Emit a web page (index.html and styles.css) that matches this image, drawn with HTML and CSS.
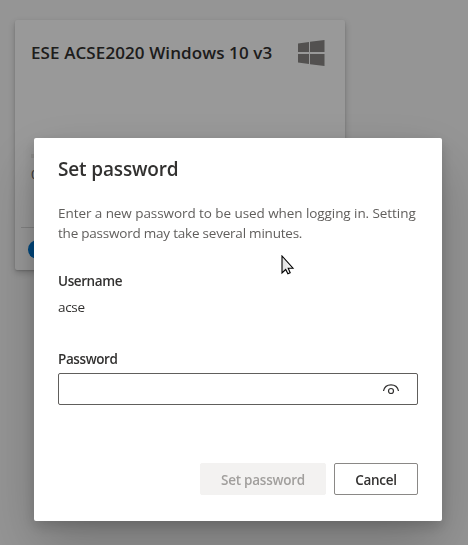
FILE: index.html
```
<!DOCTYPE html>
<html lang="en">
<head>
<meta charset="utf-8">
<title>Set password</title>
<link rel="stylesheet" href="styles.css">
</head>
<body>
<main class="page">
  <article class="card">
    <header class="card-header">
      <h2 class="card-title">ESE ACSE2020 Windows 10 v3</h2>
      <svg class="os-icon" width="27" height="26" viewBox="0 0 27 26" aria-hidden="true">
        <path d="M0 3.6 11 2v10H0zM12 1.8 26.5 0v12H12zM0 14h11v10L0 22.6zM12 14h14.5v12L12 24.2z"/>
      </svg>
    </header>
    <div class="card-body">
      <div class="progress"></div>
      <span class="hours">0</span>
    </div>
    <footer class="card-footer"><span class="toggle"></span></footer>
  </article>
</main>
<div class="overlay">
  <section class="dialog" role="dialog" aria-modal="true" aria-labelledby="dialog-title">
    <h1 class="dialog-title" id="dialog-title">Set password</h1>
    <p class="description"><span class="line-first">Enter a new password to be used when logging in. Setting</span><br><span class="line-second">the password may take several minutes.</span></p>
    <div class="label label-username">Username</div>
    <div class="value">acse</div>
    <label class="label label-password" for="password">Password</label>
    <div class="field">
      <input class="input" id="password" type="password">
      <svg class="reveal" width="16" height="11" viewBox="0 0 16 11" aria-hidden="true">
        <path d="M.5 7C1.2 3.2 4.2.8 8 .8S14.8 3.2 15.500 7"/>
        <circle cx="8" cy="7" r="2.5"/>
      </svg>
    </div>
    <div class="actions">
      <button class="button button-primary" disabled>Set password</button>
      <button class="button button-cancel">Cancel</button>
    </div>
  </section>
</div>
<svg class="cursor" width="14" height="21" viewBox="0 0 14 21" aria-hidden="true">
  <defs><linearGradient id="shade"><stop offset="0" stop-color="#ddd"/><stop offset="1" stop-color="#fff"/></linearGradient></defs>
  <path d="M1 1v17l3.7-3.5 2.2 4.300 2.300-1-2-4.600H12z"/>
</svg>
</body>
</html>
```

FILE: styles.css
```
* { box-sizing: border-box; }
body {
  margin: 0;
  height: 545px;
  overflow: hidden;
  background: #f8f8f8;
  color: #323130;
  font: 13.5px/20px "Open Sans", "Noto Sans", sans-serif;
}
h1, h2, p { margin: 0; }
.page { padding: 20px 15px; }
.card {
  display: flex;
  flex-direction: column;
  width: 330px;
  height: 250px;
  border-radius: 2px;
  background: #fff;
  box-shadow: 0 3px 7px rgba(0,0,0,.2), 0 1px 2px rgba(0,0,0,.15);
}
.card-header {
  display: flex;
  justify-content: space-between;
  padding: 20px 20px 0 16px;
}
.card-title {
  font-size: 17px;
  line-height: 26px;
  font-weight: 600;
  letter-spacing: .1px;
  white-space: nowrap;
}
.os-icon { fill: #8a8886; }
.card-body { flex: 1; padding: 88px 16px 0; }
.progress { height: 4px; background: #edebe9; }
.hours { display: block; margin-top: 6px; color: #605e5c; }
.card-footer {
  display: flex;
  align-items: center;
  height: 43px;
  margin: 0 6px;
  padding-left: 7px;
  border-top: 1px solid #d9d9d9;
}
.toggle { width: 38px; height: 19px; border-radius: 10px; background: #0078d4; }
.overlay {
  position: fixed;
  inset: 0;
  display: flex;
  justify-content: center;
  align-items: flex-start;
  padding: 138px 26px 24px 34px;
  background: rgba(0,0,0,.4);
}
.dialog {
  display: flex;
  flex-direction: column;
  width: 408px;
  height: 383px;
  padding: 17px 24px 26px;
  border-radius: 2px;
  background: #fff;
  box-shadow: 0 26px 58px rgba(0,0,0,.22), 0 5px 14px rgba(0,0,0,.18);
}
.dialog-title {
  font-size: 19px;
  line-height: 28px;
  font-weight: 600;
  letter-spacing: -.15px;
  white-space: nowrap;
}
.description { margin-top: 20px; color: #605e5c; white-space: nowrap; }
.line-first { letter-spacing: -.07px; }
.line-second { letter-spacing: -.22px; }
.label { font-weight: 600; letter-spacing: -.4px; }
.label-username { margin-top: 28px; }
.value { margin-top: 6px; letter-spacing: -.3px; }
.label-password { margin-top: 32px; }
.field {
  display: flex;
  align-items: center;
  height: 32px;
  margin-top: 4px;
  padding-right: 18px;
  border: 1px solid #605e5c;
  border-radius: 2px;
}
.input { flex: 1; min-width: 0; border: 0; outline: 0; background: none; }
.reveal { fill: none; stroke: #323130; stroke-width: 1.2; }
.actions { display: flex; justify-content: flex-end; gap: 8px; margin-top: auto; }
.button {
  height: 32px;
  padding: 2px 0 0;
  border: 1px solid #8a8886;
  border-radius: 2px;
  background: #fff;
  color: #323130;
  font: inherit;
  font-weight: 600;
  letter-spacing: -.25px;
}
.button-primary { width: 126px; border-color: #f3f2f1; background: #f3f2f1; color: #a19f9d; }
.button-cancel { width: 84px; }
.cursor {
  position: absolute;
  left: 281px;
  top: 255px;
  fill: url(#shade);
  stroke: #000;
  stroke-width: 1.1;
}
```
